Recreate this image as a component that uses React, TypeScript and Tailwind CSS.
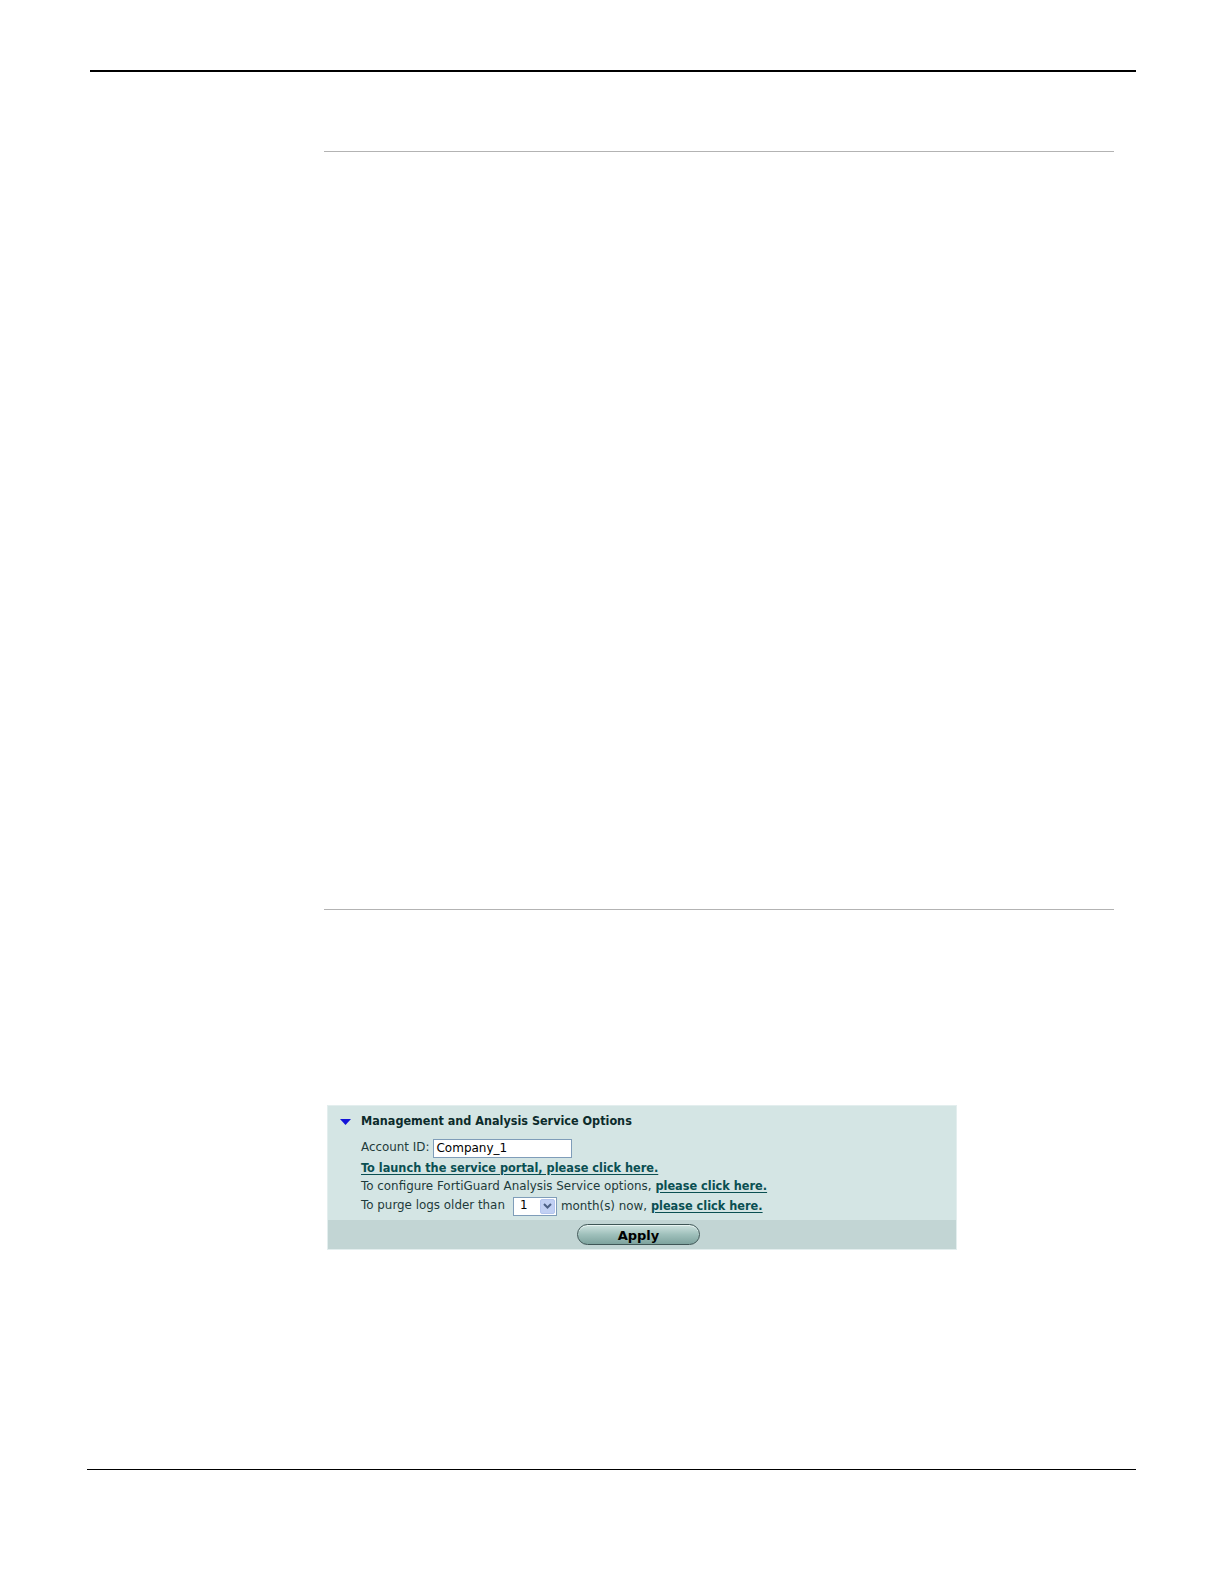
import React from 'react';

const Triangle: React.FC = () => (
  <svg width="11" height="6" viewBox="0 0 11 6" className="shrink-0">
    <polygon points="0,0 11,0 5.5,6" fill="#1414d8" />
  </svg>
);

const Link: React.FC<{ children: React.ReactNode }> = ({ children }) => (
  <a
    href="#"
    className="font-['DejaVu_Sans_Condensed','DejaVu_Sans',sans-serif] text-[12.6px] font-bold text-[#0a4f52] underline underline-offset-2"
  >
    {children}
  </a>
);

const ServicePanel: React.FC = () => {
  return (
    <div className="ml-[327px] w-[630px] bg-[#d4e5e4] border border-[#e3eeee] font-['DejaVu_Sans',sans-serif] text-[11.9px] text-[#1e3b3b]">
      <div className="pl-[12px] pt-[6px] pb-[4px]">
        <div className="flex h-[20px] items-center gap-[10px]">
          <Triangle />
          <span className="font-['DejaVu_Sans_Condensed','DejaVu_Sans',sans-serif] text-[12.5px] font-bold text-[#0c2b2b]">
            Management and Analysis Service Options
          </span>
        </div>

        <div className="ml-[21px] mt-[7px] flex flex-col">
          <div className="flex h-[19px] items-center gap-[4px]">
            <span>Account ID:</span>
            <input
              defaultValue="Company_1"
              className="h-[19px] w-[139px] border border-[#7f9db9] bg-white px-[2px] font-['DejaVu_Sans',sans-serif] text-[12px] text-black outline-none"
            />
          </div>
          <div className="mt-[2px] flex h-[18px] items-center">
            <Link>To launch the service portal, please click here.</Link>
          </div>
          <div className="flex h-[18px] items-center">
            <span>
              To configure FortiGuard Analysis Service options, <Link>please click here.</Link>
            </span>
          </div>
          <div className="mt-[1px] flex h-[19px] items-center">
            <span className="mr-[8px]">To purge logs older than</span>
            <div className="flex h-[19px] w-[44px] items-center justify-between border border-[#7f9db9] bg-white pl-[6px] pr-[1px] text-black">
              <span>1</span>
              <div className="flex h-[15px] w-[15px] items-center justify-center rounded-[2px] border border-[#b4c5ee] bg-[#c1d0f3]">
                <svg width="9" height="6" viewBox="0 0 9 6">
                  <polyline points="1,1 4.5,4.5 8,1" fill="none" stroke="#4d6185" strokeWidth="2" />
                </svg>
              </div>
            </div>
            <span className="ml-[4px]">
              month(s) now, <Link>please click here.</Link>
            </span>
          </div>
        </div>
      </div>

      <div className="flex h-[29px] justify-center bg-[#c2d5d4] pt-[4px]">
        <button className="mr-[7px] h-[21px] w-[123px] rounded-full border border-[#3f5656] bg-gradient-to-b from-[#cfe3e0] via-[#9fc0bb] to-[#7ea39e] pt-[3px] font-['DejaVu_Sans',sans-serif] text-[13px] font-bold leading-none text-black shadow-[inset_0_1px_0_#e9f4f2]">
          Apply
        </button>
      </div>
    </div>
  );
};

const App: React.FC = () => {
  return (
    <div className="w-[1224px] h-[1584px] bg-white overflow-hidden">
      <div className="pt-[70px]">
        <div className="ml-[90px] w-[1046px] h-[1.5px] bg-black" />
      </div>
      <div className="mt-[79px] ml-[324px] w-[790px] h-[1px] bg-[#b3b3b3]" />
      <div className="mt-[757px] ml-[324px] w-[790px] h-[1px] bg-[#b3b3b3]" />
      <div className="mt-[195px]">
        <ServicePanel />
      </div>
      <div className="mt-[219px] ml-[87px] w-[1049px] h-[1.5px] bg-black" />
    </div>
  );
};

export default App;
